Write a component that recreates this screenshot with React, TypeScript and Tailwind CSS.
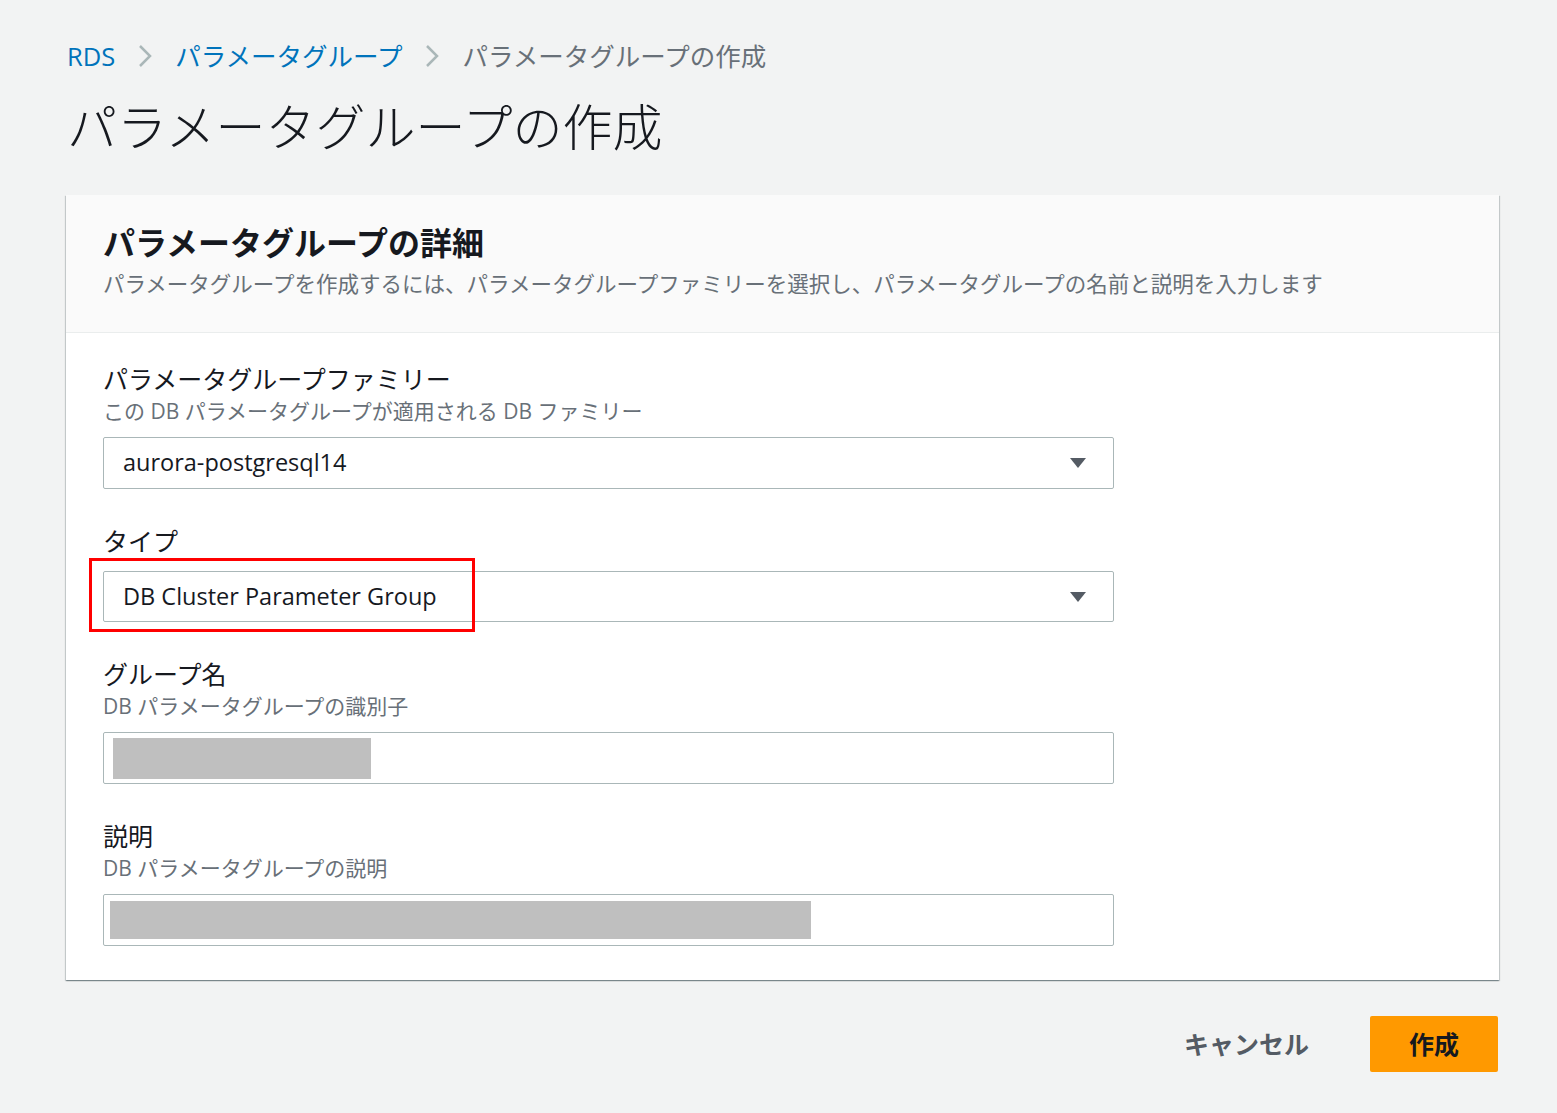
import React from "react";

const font = { fontFamily: '"Open Sans", "Noto Sans CJK JP", sans-serif' };
const cjk = { fontFamily: '"Noto Sans CJK JP", sans-serif' };

function Caret() {
  return (
    <svg width="18" height="12" viewBox="0 0 18 12" className="shrink-0">
      <path d="M1 1h16L9 11z" fill="#545b64" />
    </svg>
  );
}

function Chevron() {
  return (
    <svg width="14" height="24" viewBox="0 0 14 24" className="mx-[23px]">
      <path d="M2 2l10 10L2 22" fill="none" stroke="#aab7b8" strokeWidth="2.5" />
    </svg>
  );
}

function FieldHead({ label, desc, mt = "mt-[37px]" }: { label: string; desc?: string; mt?: string }) {
  return (
    <div className={mt}>
      <div className="h-[32px] flex items-center text-[25px] text-[#16191f]">{label}</div>
      {desc && (
        <div className="h-[28px] mt-[2px] flex items-center text-[21px] text-[#687078]">{desc}</div>
      )}
    </div>
  );
}

export default function App() {
  return (
    <div style={font} className="min-h-screen bg-[#f2f3f3] pl-[66px] pr-[58px] pt-[36px] pb-[40px]">
      {/* パンくず */}
      <div className="h-[40px] flex items-center text-[25.5px] pl-[1px]">
        <span className="text-[#0073bb]">RDS</span>
        <Chevron />
        <span className="text-[#0073bb]">パラメータグループ</span>
        <Chevron />
        <span className="text-[#687078]">パラメータグループの作成</span>
      </div>

      <h1 style={cjk} className="mt-[18px] h-[60px] flex items-center text-[50px] font-light text-[#16191f] pl-[1px]">
        パラメータグループの作成
      </h1>

      {/* カード */}
      <div className="mt-[41px] w-[1433px] bg-white shadow-[0_1px_1px_0_rgba(0,28,36,0.3),1px_1px_1px_0_rgba(0,28,36,0.15),-1px_1px_1px_0_rgba(0,28,36,0.15)]">
        <div className="bg-[#fafafa] border-b border-[#eaeded] pl-[37px] pt-[28px] pb-[33px]">
          <div className="h-[40px] flex items-center text-[32px] font-bold text-[#16191f]">
            パラメータグループの詳細
          </div>
          <div className="h-[30px] mt-[6px] flex items-center text-[21.5px] text-[#687078]">
            パラメータグループを作成するには、パラメータグループファミリーを選択し、パラメータグループの名前と説明を入力します
          </div>
        </div>

        <div className="pl-[37px] pt-[31px] pb-[34px]">
          <FieldHead mt="mt-0" label="パラメータグループファミリー" desc="この DB パラメータグループが適用される DB ファミリー" />
          <div className="mt-[11px] w-[1011px] h-[52px] border border-[#aab7b8] rounded-[2px] flex items-center justify-between pl-[19px] pr-[26px] text-[23.5px] text-[#16191f]">
            <span>aurora-postgresql14</span>
            <Caret />
          </div>

          <FieldHead label="タイプ" />
          <div className="relative mt-[13px] w-[1011px] h-[51px] border border-[#aab7b8] rounded-[2px] flex items-center justify-between pl-[19px] pr-[26px] text-[23.5px] text-[#16191f]">
            <span>DB Cluster Parameter Group</span>
            <Caret />
            <div className="absolute left-[-15px] top-[-14px] w-[386px] h-[74px] border-[3px] border-[#ff0000]" />
          </div>

          <FieldHead label="グループ名" desc="DB パラメータグループの識別子" />
          <div className="mt-[11px] w-[1011px] h-[52px] border border-[#aab7b8] rounded-[2px] flex items-center pl-[9px]">
            <div className="w-[258px] h-[41px] bg-[#bfbfbf]" />
          </div>

          <FieldHead label="説明" desc="DB パラメータグループの説明" />
          <div className="mt-[11px] w-[1011px] h-[52px] border border-[#aab7b8] rounded-[2px] flex items-center pl-[6px]">
            <div className="w-[701px] h-[38px] bg-[#bfbfbf]" />
          </div>
        </div>
      </div>

      {/* ボタン */}
      <div className="mt-[36px] w-[1433px] flex justify-end items-center">
        <button style={cjk} className="mr-[61px] text-[25px] font-bold text-[#545b64]">キャンセル</button>
        <button style={cjk} className="w-[128px] h-[56px] bg-[#ff9900] rounded-[2px] text-[25px] font-bold text-[#16191f] mr-[1px]">
          作成
        </button>
      </div>
    </div>
  );
}
